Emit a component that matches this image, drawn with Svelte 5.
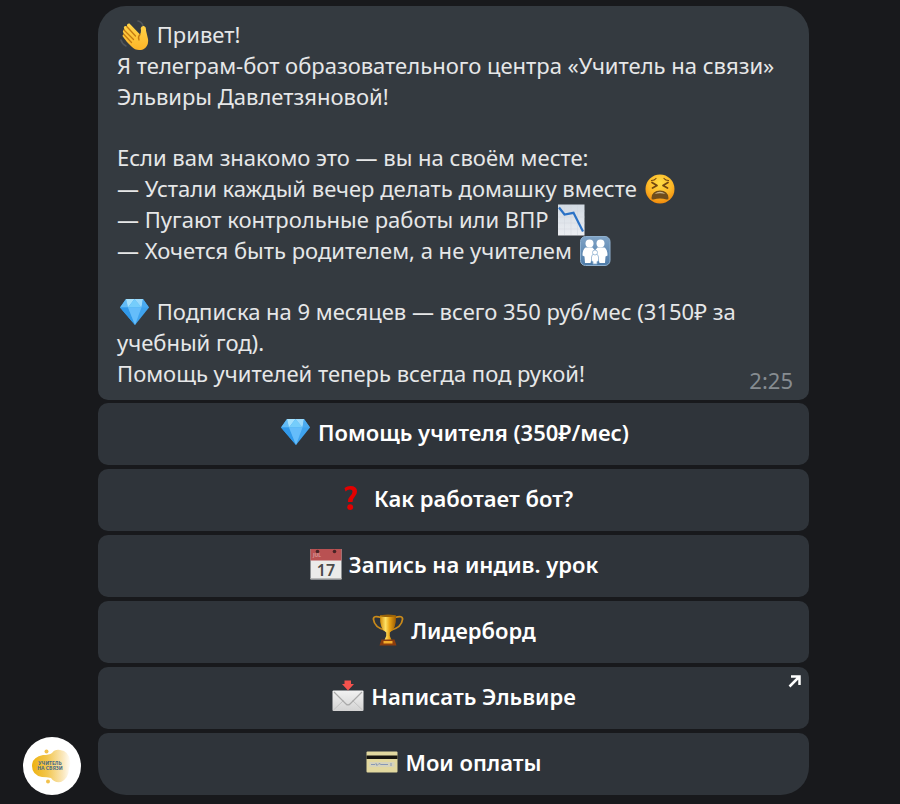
<script>
  const time = "2:25";

  const paragraphs = [
    [
      [{ icon: "wave" }, " Привет!"],
      ["Я телеграм-бот образовательного центра «Учитель на связи» Эльвиры Давлетзяновой!"],
    ],
    [
      ["Если вам знакомо это — вы на своём месте:"],
      ["— Устали каждый вечер делать домашку вместе ", { icon: "tired" }],
      ["— Пугают контрольные работы или ВПР ", { icon: "chart" }],
      ["— Хочется быть родителем, а не учителем ", { icon: "family" }],
    ],
    [
      [{ icon: "gem" }, " Подписка на 9 месяцев — всего 350 руб/мес (3150₽ за учебный год)."],
      ["Помощь учителей теперь всегда под рукой!"],
    ],
  ];

  const buttons = [
    { icon: "gem", text: "Помощь учителя (350₽/мес)" },
    { icon: "question", text: "Как работает бот?" },
    { icon: "calendar", text: "Запись на индив. урок" },
    { icon: "trophy", text: "Лидерборд" },
    { icon: "envelope", text: "Написать Эльвире", href: "#elvira" },
    { icon: "card", text: "Мои оплаты" },
  ];
</script>

<svg class="defs" aria-hidden="true">
  <defs>
    <linearGradient id="skin" x1="0" y1="0" x2="0" y2="1">
      <stop offset="0" stop-color="#ffd54a" />
      <stop offset="1" stop-color="#fdb528" />
    </linearGradient>
    <radialGradient id="face" cx="0.5" cy="0.3" r="0.7">
      <stop offset="0" stop-color="#ffdc45" />
      <stop offset="0.6" stop-color="#fdb827" />
      <stop offset="1" stop-color="#f08a0c" />
    </radialGradient>
    <linearGradient id="paper" x1="0" y1="0" x2="0" y2="1">
      <stop offset="0" stop-color="#d2dae3" />
      <stop offset="1" stop-color="#eceef2" />
    </linearGradient>
    <linearGradient id="sign" x1="0" y1="0" x2="0" y2="1">
      <stop offset="0" stop-color="#7fa3c6" />
      <stop offset="1" stop-color="#4e7ba8" />
    </linearGradient>
    <linearGradient id="gold" x1="0" y1="0" x2="1" y2="0">
      <stop offset="0" stop-color="#d08a08" />
      <stop offset="0.35" stop-color="#ffe164" />
      <stop offset="0.6" stop-color="#e9a313" />
      <stop offset="1" stop-color="#9c5c04" />
    </linearGradient>
    <linearGradient id="mail" x1="0" y1="0" x2="0" y2="1">
      <stop offset="0" stop-color="#f2f2f2" />
      <stop offset="1" stop-color="#d3d3d3" />
    </linearGradient>
    <linearGradient id="blob" x1="0" y1="0" x2="1" y2="0">
      <stop offset="0" stop-color="#eeb211" />
      <stop offset="0.4" stop-color="#f2c64e" />
      <stop offset="0.8" stop-color="#fae7ba" />
      <stop offset="1" stop-color="#fffdf8" />
    </linearGradient>
  </defs>
</svg>

{#snippet emoji(name)}
  <svg class="emoji" viewBox="0 0 32 32" aria-hidden="true">
    {#if name === "wave"}
      <g fill="none" stroke="#50555a" stroke-width="1.600" stroke-linecap="round">
        <path d="M20 2q4 1 5 5M3 21q1 4 5 6" />
      </g>
      <path
        d="M9 23 4.800 17.500Q4 15.500 6 15.500L5 13Q4.500 11 6.500 10.800L5.800 8.600Q6 6.500 8.200 7.200L9 7.800Q8.500 4 11.500 4.500L22 15.500Q23.500 13 22.700 9.500 23 6.500 26 7 28.500 8 28 11.500L30 20Q31 27 25 30.500 18 32.500 13.500 27.500Z"
        fill="url(#skin)"
      />
      <path
        d="M9 7.800 17.500 17M6 11 15.500 20.500M6 15.500 13.500 23.500M22 15.500Q19.500 18 21 21"
        fill="none"
        stroke="#c47a10"
        stroke-width="1.300"
        stroke-linecap="round"
      />
    {:else if name === "tired"}
      <circle cx="16" cy="16" r="14.500" fill="url(#face)" />
      <g fill="none" stroke="#714611" stroke-linecap="round" stroke-linejoin="round">
        <path d="M8 9.500 13 12.500 8.500 15M24 9.500 19 12.500 23.500 15" stroke-width="1.700" />
        <path d="M7.500 7.500Q10.500 7.500 12 5.500M24.500 7.500Q21.500 7.500 20 5.500" stroke-width="1.200" />
      </g>
      <path d="M7.500 25Q8 17.500 16 17.500T24.500 25Q24.500 27 22.500 26.500 16 24.500 9.500 26.500 7.500 27 7.500 25Z" fill="#6f4d1c" />
      <path d="M10.500 21Q16 16.500 21.500 21 16 19.500 10.500 21Z" fill="#c9b48c" />
    {:else if name === "chart"}
      <rect x="3" y="0.500" width="26.500" height="31" fill="url(#paper)" />
      <path
        d="M3 7h26.500M3 13h26.500M3 19h26.500M3 25h26.500M9.500 1v30M16 1v30M22.500 1v30"
        stroke="#d0d7df"
        stroke-width="0.500"
      />
      <path d="M4 3.500 9.500 10.500 18.500 8.800 28 27.500" fill="none" stroke="#2b72c6" stroke-width="2.200" />
    {:else if name === "family"}
      <rect x="1.500" y="1.500" width="29.500" height="29" rx="5" fill="url(#sign)" stroke="#8fb0cf" />
      <g fill="#fff">
        <circle cx="10.500" cy="8.500" r="4" />
        <circle cx="21.500" cy="8.500" r="4" />
        <path d="M6.500 12.500h7l2.500 3 2.500-3h7q3 2 3 8l-2 1-.5 6.500h-5.500L19.500 24h-7L11.500 28H6l-.5-6.500-2-1q0-6 3-8Z" />
      </g>
      <g fill="#fff" stroke="#8db0d0" stroke-width="0.800">
        <path d="M12.500 22q0-3 3.500-3t3.500 3v4l-1.500.5V29h-4v-2.500l-1.500-.5Z" />
        <circle cx="16" cy="17.500" r="2.500" />
      </g>
    {:else if name === "gem"}
      <path d="M8 3H25L31 11.500 17 29 2 11.500Z" fill="#3fa3ee" />
      <path d="M8 3 10 11.500 2 11.500Z" fill="#63bbf5" />
      <path d="M8 3H16.500L10 11.500Z" fill="#a5e1fd" />
      <path d="M16.500 3 10 11.500H23.500Z" fill="#75cdfb" />
      <path d="M16.500 3H25L23.500 11.500Z" fill="#9bdafc" />
      <path d="M25 3 31 11.500H23.500Z" fill="#4aaaf0" />
      <path d="M2 11.500H10L17 29Z" fill="#3199ea" />
      <path d="M10 11.500H23.500L17 29Z" fill="#65bdfa" />
    {:else if name === "question"}
      <path
        d="M9.500 6Q12 4 15.500 4 22 4 22 9.500 22 12.500 19.500 15 17.500 17 17.500 20H13Q12.800 16.500 15.200 14 17.500 11.800 17.500 9.800 17.500 7.500 14.800 7.500 12.500 7.500 10.500 9.500Z"
        fill="#e30000"
      />
      <circle cx="15.200" cy="25.200" r="2.900" fill="#e30000" />
    {:else if name === "calendar"}
      <path d="M0.500 1H31.500V31.500H0.500Z" fill="#ebebea" />
      <path d="M0.500 1H31.500V12.500H0.500Z" fill="#b95152" />
      <path d="M0.500 30.500h31" stroke="#b9b9b9" />
      <circle cx="7.500" cy="3.500" r="1.800" fill="#482426" />
      <circle cx="24.500" cy="3.500" r="1.800" fill="#482426" />
      <text x="3" y="9" class="month">JUL</text>
      <text x="16" y="28" class="day" text-anchor="middle">17</text>
    {:else if name === "trophy"}
      <g fill="none" stroke="#c98a1a" stroke-width="1.800">
        <path d="M9 3.500Q1 1 1.500 5.500 2.500 13.500 13 16M23 3.500Q31 1 30.500 5.500 29.500 13.500 19 16" />
      </g>
      <path d="M8 1.500H24Q24.500 15 17.800 18.500V22L19.500 26H12.500L14.200 22V18.500Q7.500 15 8 1.500Z" fill="url(#gold)" />
      <ellipse cx="16" cy="1.800" rx="8" ry="1.300" fill="#9c6408" />
      <path d="M9.500 25.500H22.500L24.500 31.500H7.500Z" fill="#8c3d0e" />
      <path d="M11.500 27H20.500V29.500H11.500Z" fill="#f4ad2b" />
    {:else if name === "envelope"}
      <rect x="0.500" y="10.500" width="31" height="20.500" rx="1" fill="url(#mail)" />
      <path d="M1.500 30 11.500 20.500M30.500 30 20.500 20.500" stroke="#c2c2c2" stroke-width="1" />
      <path d="M2 12 14 24Q16 26 18 24L30 12" fill="none" stroke="#aaa" stroke-width="1.200" />
      <path d="M12.500 0.500H19V4H22L16 10.500 10 4H12.500Z" fill="#f4524d" />
    {:else if name === "card"}
      <rect x="0.500" y="5.500" width="31" height="21" rx="1" fill="#e2d89f" />
      <path d="M0.500 9.500H31.500V13H0.500Z" fill="#17150f" />
      <path d="M3.500 16H28.500V21H3.500Z" fill="#d5d3bc" />
      <path d="M5 18.500h4l1-1 1 2 2-2 2 1h7M25 17v3" fill="none" stroke="#8797b5" stroke-width="1" />
    {/if}
  </svg>
{/snippet}

{#snippet label(button)}
  {@render emoji(button.icon)}
  <span>{button.text}</span>
{/snippet}

<main class="chat">
  <svg class="avatar" viewBox="0 0 58 58" role="img" aria-label="Учитель на связи">
    <circle cx="29" cy="29" r="29" fill="#fff" />
    <path
      d="M20 18Q26 18 29 16 32 12 37 13 46 14 47 24 48 28 46 31 46 41 38 45 31 46 28 41 24 40 19 40 9 38 9 29 9 20 20 18Z"
      fill="url(#blob)"
    />
    <circle cx="23.500" cy="14.500" r="2" fill="#f2c14c" />
    <circle cx="25" cy="44.500" r="2" fill="#f2c14c" />
    <text x="27" y="28" text-anchor="middle" class="brand">УЧИТЕЛЬ</text>
    <text x="27" y="33" text-anchor="middle" class="brand">НА СВЯЗИ</text>
  </svg>

  <div class="message">
    <article class="bubble">
      {#each paragraphs as lines}
        <p>
          {#each lines as line, i}
            {#if i > 0}<br />{/if}
            {#each line as part}{#if part.icon}{@render emoji(part.icon)}{:else}{part}{/if}{/each}
          {/each}
        </p>
      {/each}
      <time>{time}</time>
    </article>

    <nav class="keyboard">
      {#each buttons as button}
        {#if button.href}
          <a class="key" href={button.href}>
            {@render label(button)}
            <svg class="external" viewBox="0 0 14 14" aria-hidden="true">
              <path d="M1.500 12.500 11 3M3 2.500H11.500V11" />
            </svg>
          </a>
        {:else}
          <button class="key" type="button">{@render label(button)}</button>
        {/if}
      {/each}
    </nav>
  </div>
</main>

<style>
  :global(body) {
    background: #18191c;
    font-family: "Noto Sans", "Open Sans", sans-serif;
  }

  .defs {
    position: absolute;
    width: 0;
    height: 0;
  }

  .chat {
    display: flex;
    align-items: flex-end;
    gap: 17px;
    padding: 6px 91px 9px 23px;
  }

  .avatar {
    flex: none;
    width: 58px;
    height: 58px;
  }

  .brand {
    font-size: 5px;
    font-weight: 700;
    fill: #4a6b86;
  }

  .message {
    flex: 1;
    min-width: 0;
    display: flex;
    flex-direction: column;
    gap: 3px;
  }

  .bubble {
    position: relative;
    display: flex;
    flex-direction: column;
    gap: 30px;
    padding: 13px 16px 11px 19px;
    border-radius: 28px 28px 10px 10px;
    background: #343a40;
    color: #e6e7e8;
    font-size: 22px;
    line-height: 31px;
  }

  .bubble p {
    margin: 0;
  }

  .bubble time {
    position: absolute;
    right: 16px;
    bottom: 4px;
    color: #868c91;
  }

  .emoji {
    width: 32px;
    height: 32px;
    margin: -4px 1px;
    vertical-align: -4px;
  }

  .month {
    font-size: 5px;
    fill: #dba3a3;
  }

  .day {
    font-size: 16px;
    font-weight: 600;
    fill: #4b4b4b;
  }

  .keyboard {
    display: flex;
    flex-direction: column;
    gap: 4px;
  }

  .key {
    position: relative;
    display: flex;
    align-items: center;
    justify-content: center;
    gap: 6px;
    min-height: 62px;
    padding: 8px 16px 12px;
    box-sizing: border-box;
    border: 0;
    border-radius: 10px;
    background: #2f343a;
    color: #fff;
    font-family: inherit;
    font-size: 22px;
    font-weight: 600;
    line-height: 31px;
    text-decoration: none;
    cursor: pointer;
  }

  .key:hover {
    background: #373d44;
  }

  .key:last-child {
    border-radius: 10px 10px 28px 28px;
  }

  .external {
    position: absolute;
    top: 7px;
    right: 7px;
    width: 14px;
    height: 14px;
    fill: none;
    stroke: #fff;
    stroke-width: 2.500;
  }
</style>
